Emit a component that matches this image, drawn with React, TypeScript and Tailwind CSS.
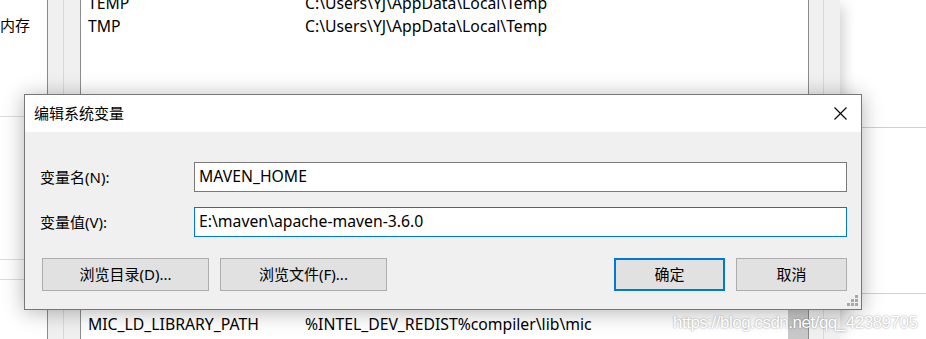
import React from "react";

const ui = "font-['Noto_Sans','Noto_Sans_CJK_SC',sans-serif]";

const topRows = [
  { name: "TEMP", value: "C:\\Users\\YJ\\AppData\\Local\\Temp" },
  { name: "TMP", value: "C:\\Users\\YJ\\AppData\\Local\\Temp" },
];

const bottomRows = [
  { name: "MIC_LD_LIBRARY_PATH", value: "%INTEL_DEV_REDIST%compiler\\lib\\mic" },
];

const Row: React.FC<{ name: string; value: string }> = ({ name, value }) => (
  <div className="flex h-[23px] items-center pl-[7px] text-[15.75px] text-black">
    <span className="w-[217px] shrink-0">{name}</span>
    <span>{value}</span>
  </div>
);

const CloseIcon = () => (
  <svg width="13" height="13" viewBox="0 0 13 13">
    <path d="M0.5 0.5 L12.5 12.5 M12.5 0.5 L0.5 12.5" stroke="#000" strokeWidth="1.1" />
  </svg>
);

const Grip = () => (
  <svg width="11" height="11" viewBox="0 0 11 11">
    {[
      [8, 0],
      [4, 4],
      [8, 4],
      [0, 8],
      [4, 8],
      [8, 8],
    ].map(([x, y], i) => (
      <rect key={i} x={x} y={y} width="3" height="3" fill="#a8a8a8" />
    ))}
  </svg>
);

const Button: React.FC<{ label: string; wide?: boolean; primary?: boolean }> = ({ label, wide, primary }) => (
  <button
    className={`flex h-[33px] items-center justify-center bg-[#e1e1e1] text-[15px] text-black ${
      wide ? "w-[167px]" : "w-[111px]"
    } ${primary ? "border-2 border-[#0078d7]" : "border border-[#adadad]"}`}
  >
    {label}
  </button>
);

export default function App() {
  return (
    <div className={`relative flex h-[339px] w-[926px] overflow-hidden bg-white ${ui}`}>
      {/* left panel of the system properties window */}
      <div className="flex w-[47px] shrink-0 flex-col">
        <div className="h-[116px] pt-[14px] text-[15px] leading-[22px] text-black">内存</div>
        <div className="h-[143px] border-t border-[#dcdcdc]" />
        <div className="h-[20px] border-t border-[#dcdcdc]" />
        <div className="flex-1 border-t border-[#dcdcdc]" />
      </div>

      {/* environment variables window */}
      <div className="flex shrink-0 shadow-[8px_0_14px_-6px_rgba(0,0,0,0.22)]">
        <div className="flex w-[33px] border-l border-[#8c8c8c] bg-[#f0f0f0]">
          <div className="w-[16px] border-r border-[#d9d9d9]" />
        </div>
        <div className="flex w-[728px] border-l border-[#8c8c8c] bg-white">
          <div className="flex flex-1 flex-col justify-between">
            <div className="mt-[-8px]">
              {topRows.map((r) => (
                <Row key={r.name} {...r} />
              ))}
            </div>
            <div className="pb-[3px]">
              {bottomRows.map((r) => (
                <Row key={r.name} {...r} />
              ))}
            </div>
          </div>
          <div className="flex w-[20px] flex-col justify-end">
            <div className="h-[29px] bg-[#c8c8c8]" />
          </div>
        </div>
        <div className="flex w-[32px] border-l border-[#8c8c8c] bg-[#f0f0f0]">
          <div className="w-[15px] border-r border-[#d9d9d9]" />
        </div>
      </div>

      {/* desktop area to the right */}
      <div className="flex flex-1 flex-col">
        <div className="h-[128px] border-b border-[#d0d0d0]" />
        <div className="h-[166px] border-b border-[#d0d0d0]" />
      </div>

      {/* edit dialog */}
      <div className="absolute left-[24px] top-[94px] z-20 flex h-[216px] w-[838px] flex-col border border-[#777] bg-[#f0f0f0] shadow-[0_2px_20px_rgba(0,0,0,0.3)]">
        <div className="flex h-[37px] items-center justify-between bg-white pl-[9px] pr-[14px]">
          <span className="text-[15px] text-black">编辑系统变量</span>
          <CloseIcon />
        </div>
        <div className="flex flex-col gap-[15px] pl-[15px] pr-[14px] pt-[30px]">
          <div className="flex items-center">
            <span className="w-[154px] text-[15px] text-black">变量名(N):</span>
            <div className="flex h-[30px] flex-1 items-center border border-[#7a7a7a] bg-white pl-[4px] text-[15.75px] text-black">
              MAVEN_HOME
            </div>
          </div>
          <div className="flex items-center">
            <span className="w-[154px] text-[15px] text-black">变量值(V):</span>
            <div className="flex h-[30px] flex-1 items-center border border-[#0078d7] bg-white pl-[4px] text-[15.75px] text-black">
              E:\maven\apache-maven-3.6.0
            </div>
          </div>
        </div>
        <div className="flex justify-between pl-[17px] pr-[14px] pt-[21px]">
          <div className="flex gap-[11px]">
            <Button label="浏览目录(D)..." wide />
            <Button label="浏览文件(F)..." wide />
          </div>
          <div className="flex gap-[11px]">
            <Button label="确定" primary />
            <Button label="取消" />
          </div>
        </div>
        <div className="absolute bottom-[3px] right-[3px]">
          <Grip />
        </div>
      </div>

      {/* watermark */}
      <div className="absolute left-[673px] top-[310px] z-30 font-['Liberation_Sans',sans-serif] text-[17px] tracking-[-0.5px] text-white [text-shadow:0_0_2px_rgba(0,0,0,0.45)]">
        https://blog.csdn.net/qq_42389705
      </div>
    </div>
  );
}
